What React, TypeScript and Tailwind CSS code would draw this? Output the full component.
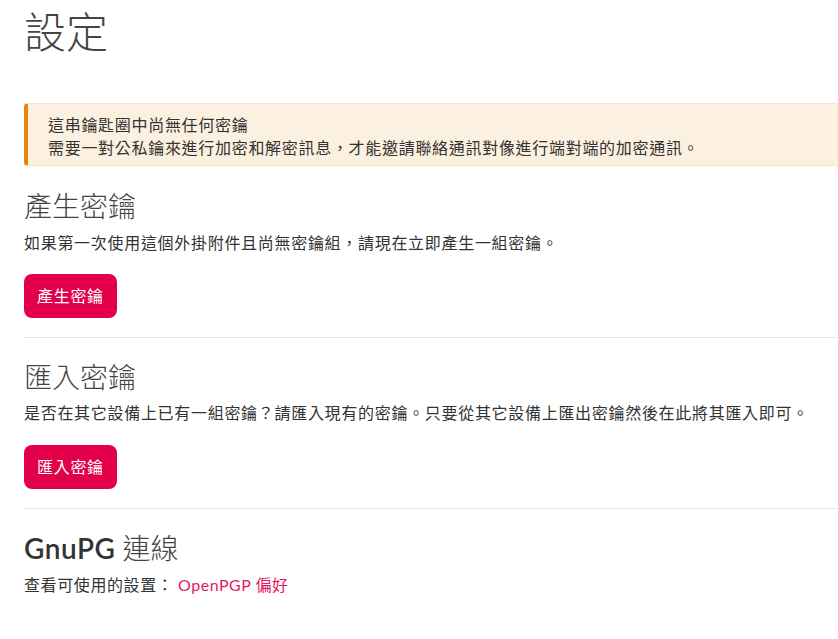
import React from "react";

const font = { fontFamily: "Lato, 'Noto Sans CJK TC', 'Noto Sans', sans-serif" };

export default function App() {
  return (
    <div className="min-h-[639px] overflow-hidden bg-white pl-6 text-[#333]" style={font}>
      <h1 className="mt-2 text-[42px] leading-[48px] font-light text-[#444]">設定</h1>

      <div className="mt-[47px] -mr-4 rounded-[4px] border border-[#f7e3c6] border-l-4 border-l-[#e8860c] bg-[#fcf0e0] pt-[9px] pb-[6px] pl-5 text-[16px] tracking-[0.7px] leading-[23px] text-[#333]">
        <p>這串鑰匙圈中尚無任何密鑰</p>
        <p>需要一對公私鑰來進行加密和解密訊息，才能邀請聯絡通訊對像進行端對端的加密通訊。</p>
      </div>

      <section className="mt-[22px]">
        <h2 className="text-[28px] leading-[36px] font-light text-[#444]">產生密鑰</h2>
        <p className="mt-[7px] text-[16px] leading-[24px] tracking-[0.7px]">
          如果第一次使用這個外掛附件且尚無密鑰組，請現在立即產生一組密鑰。
        </p>
        <button className="mt-[19px] h-11 rounded-lg bg-[#e3004a] px-[13px] text-[16px] tracking-[0.7px] text-white">
          產生密鑰
        </button>
      </section>

      <div className="mt-[19px] h-px bg-[#e6e6e6]" />

      <section className="mt-[21px]">
        <h2 className="text-[28px] leading-[36px] font-light text-[#444]">匯入密鑰</h2>
        <p className="mt-[6px] text-[16px] leading-[24px] tracking-[0.7px]">
          是否在其它設備上已有一組密鑰？請匯入現有的密鑰。只要從其它設備上匯出密鑰然後在此將其匯入即可。
        </p>
        <button className="mt-[20px] h-11 rounded-lg bg-[#e3004a] px-[13px] text-[16px] tracking-[0.7px] text-white">
          匯入密鑰
        </button>
      </section>

      <div className="mt-[19px] h-px bg-[#e6e6e6]" />

      <section className="mt-[21px]">
        <h2 className="text-[28px] leading-[36px] text-[#444]">
          <span className="font-semibold tracking-[0.5px] text-[#333]">GnuPG</span> <span className="font-light">連線</span>
        </h2>
        <p className="mt-[7px] text-[16px] leading-[24px] tracking-[0.6px]">
          查看可使用的設置： <a className="text-[#e6185a] tracking-[0.5px]">OpenPGP 偏好</a>
        </p>
      </section>
    </div>
  );
}
